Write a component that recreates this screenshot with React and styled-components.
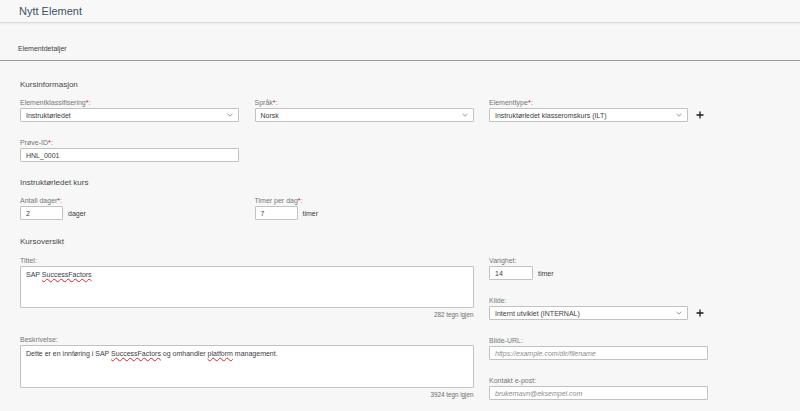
import styled, { createGlobalStyle } from "styled-components";

const GlobalStyle = createGlobalStyle`
  html, body {
    margin: 0;
    padding: 0;
    background: #f7f7f7;
  }
  body {
    font-family: "Liberation Sans", Arial, sans-serif;
    color: #3a3d41;
  }
`;

const Page = styled.div`
  width: 800px;
  height: 411px;
  overflow: hidden;
  background: #f7f7f7;
`;

const Header = styled.header`
  height: 22px;
  padding-left: 19px;
  display: flex;
  align-items: center;
  background: #f8f8f8;
  border-bottom: 1px solid #dcdcdc;
  box-shadow: 0 1px 2px rgba(0, 0, 0, 0.06);
`;

const HeaderTitle = styled.h1`
  margin: 0;
  font-size: 11px;
  font-weight: 400;
  color: #3d5368;
`;

const DetailsBar = styled.div`
  height: 38px;
  box-sizing: border-box;
  padding: 22px 0 0 18px;
  font-size: 7px;
  line-height: 8px;
  color: #3a3d41;
  border-bottom: 1px solid #9a9a9a;
`;

const Form = styled.div`
  padding: 0 20px;
`;

const SectionTitle = styled.h2`
  margin: ${(p) => p.$top}px 0 ${(p) => p.$bottom}px;
  font-size: 8px;
  line-height: 10px;
  font-weight: 400;
  color: #45484c;
`;

const Grid = styled.div`
  display: grid;
  grid-template-columns: 219px 219px 219px;
  column-gap: 15.5px;
  row-gap: 17px;
`;

const Field = styled.div`
  display: flex;
  flex-direction: column;
  gap: ${(p) => p.$gap ?? 1}px;
`;

const Label = styled.label`
  font-size: 7px;
  line-height: 8px;
  color: #74777a;
`;

const Req = styled.span`
  color: #c4161c;
`;

const Row = styled.div`
  display: flex;
  align-items: center;
  gap: ${(p) => p.$gap ?? 5}px;
`;

const Box = styled.div`
  box-sizing: border-box;
  width: ${(p) => p.$w ?? "100%"};
  height: ${(p) => p.$h ?? 14}px;
  flex: none;
  background: #ffffff;
  border: 1px solid #c2c2c2;
  border-radius: 1px;
  padding: 0 5px;
  display: flex;
  align-items: center;
  justify-content: space-between;
  font-size: 7px;
  color: #3a3d41;
`;

const Placeholder = styled.span`
  font-style: italic;
  color: #8a8d90;
`;

const Area = styled.div`
  box-sizing: border-box;
  height: ${(p) => p.$h}px;
  background: #ffffff;
  border: 1px solid #c2c2c2;
  border-radius: 1px;
  padding: 3px 5px;
  font-size: 7px;
  line-height: 9px;
  color: #3a3d41;
`;

const Spell = styled.span`
  text-decoration: underline wavy #d9262b;
  text-decoration-thickness: 0.5px;
  text-underline-offset: 1px;
`;

const Counter = styled.div`
  margin-top: 3px;
  text-align: right;
  font-size: 6.3px;
  line-height: 7px;
  color: #6a6d70;
`;

const Unit = styled.span`
  font-size: 7px;
  color: #3a3d41;
`;

const PlusButton = styled.button`
  border: 0;
  background: none;
  padding: 0;
  width: 12px;
  height: 12px;
  display: flex;
  align-items: center;
  justify-content: center;
  cursor: pointer;
`;

const Bottom = styled.div`
  display: grid;
  grid-template-columns: 453.5px 219px;
  column-gap: 15.5px;
`;

const Column = styled.div`
  display: flex;
  flex-direction: column;
  gap: ${(p) => p.$gap}px;
`;

function Chevron() {
  return (
    <svg width="6" height="4" viewBox="0 0 6 4">
      <path d="M0.5 0.8 L3 3.2 L5.5 0.8" fill="none" stroke="#6a6d70" strokeWidth="0.7" />
    </svg>
  );
}

function Plus() {
  return (
    <svg width="8" height="8" viewBox="0 0 8 8">
      <path d="M4 0.5 V7.5 M0.5 4 H7.5" stroke="#1d1d1d" strokeWidth="1.3" />
    </svg>
  );
}

function Select({ value, w }) {
  return (
    <Box $w={w}>
      <span>{value}</span>
      <Chevron />
    </Box>
  );
}

function FieldLabel({ text, required }) {
  return (
    <Label>
      {text}
      {required && <Req>*</Req>}:
    </Label>
  );
}

export default function App() {
  return (
    <Page>
      <GlobalStyle />
      <Header>
        <HeaderTitle>Nytt Element</HeaderTitle>
      </Header>
      <DetailsBar>Elementdetaljer</DetailsBar>

      <Form>
        <SectionTitle $top={19} $bottom={9}>Kursinformasjon</SectionTitle>
        <Grid>
          <Field>
            <FieldLabel text="Elementklassifisering" required />
            <Select value="Instruktørledet" />
          </Field>
          <Field>
            <FieldLabel text="Språk" required />
            <Select value="Norsk" />
          </Field>
          <Field>
            <FieldLabel text="Elementtype" required />
            <Row $gap={6}>
              <Select value="Instruktørledet klasseromskurs (ILT)" w="199px" />
              <PlusButton><Plus /></PlusButton>
            </Row>
          </Field>
          <Field>
            <FieldLabel text="Prøve-ID" required />
            <Box>HNL_0001</Box>
          </Field>
        </Grid>

        <SectionTitle $top={16} $bottom={9}>Instruktørledet kurs</SectionTitle>
        <Grid>
          <Field>
            <FieldLabel text="Antall dager" required />
            <Row>
              <Box $w="43px">2</Box>
              <Unit>dager</Unit>
            </Row>
          </Field>
          <Field>
            <FieldLabel text="Timer per dag" required />
            <Row>
              <Box $w="43px">7</Box>
              <Unit>timer</Unit>
            </Row>
          </Field>
        </Grid>

        <SectionTitle $top={17} $bottom={10}>Kursoversikt</SectionTitle>
        <Bottom>
          <Column $gap={18}>
            <Field $gap={1}>
              <FieldLabel text="Tittel" />
              <div>
                <Area $h={42}>
                  SAP <Spell>SuccessFactors</Spell>
                </Area>
                <Counter>282 tegn igjen</Counter>
              </div>
            </Field>
            <Field $gap={1}>
              <FieldLabel text="Beskrivelse" />
              <div>
                <Area $h={43}>
                  Dette er en innføring i SAP <Spell>SuccessFactors</Spell> og omhandler{" "}
                  <Spell>platform</Spell> management.
                </Area>
                <Counter>3924 tegn igjen</Counter>
              </div>
            </Field>
          </Column>
          <Column $gap={17}>
            <Field>
              <FieldLabel text="Varighet" />
              <Row>
                <Box $w="44px">14</Box>
                <Unit>timer</Unit>
              </Row>
            </Field>
            <Field>
              <FieldLabel text="Kilde" />
              <Row $gap={6}>
                <Select value="Internt utviklet (INTERNAL)" w="199px" />
                <PlusButton><Plus /></PlusButton>
              </Row>
            </Field>
            <Field>
              <FieldLabel text="Bilde-URL" />
              <Box>
                <Placeholder>https://example.com/dir/filename</Placeholder>
              </Box>
            </Field>
            <Field>
              <FieldLabel text="Kontakt e-post" />
              <Box>
                <Placeholder>brukernavn@eksempel.com</Placeholder>
              </Box>
            </Field>
          </Column>
        </Bottom>
      </Form>
    </Page>
  );
}
